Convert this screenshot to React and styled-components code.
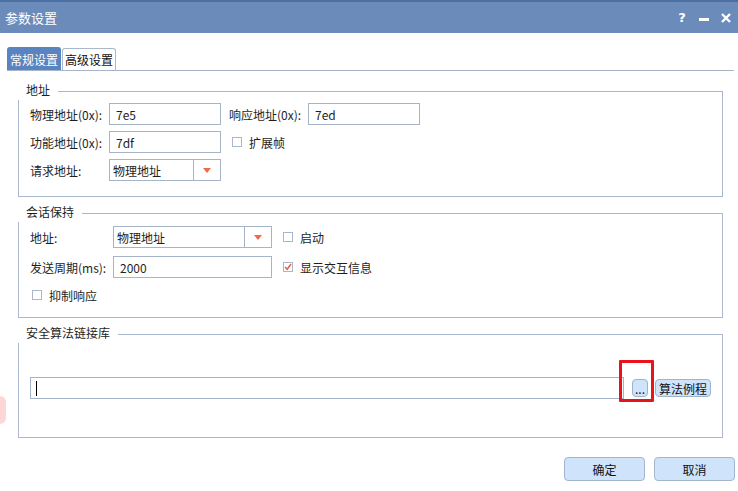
import React from "react";
import styled, { createGlobalStyle } from "styled-components";

const GlobalStyle = createGlobalStyle`
  html, body {
    margin: 0;
    padding: 0;
    background: #fff;
  }
  body {
    font-family: "Noto Sans CJK SC", "Noto Sans", sans-serif;
    font-size: 12px;
    color: #1e1e1e;
  }
`;

const Window = styled.div`
  position: relative;
  width: 738px;
  height: 491px;
  display: flex;
  flex-direction: column;
  background: #fff;
  overflow: hidden;
`;

const TitleBar = styled.div`
  height: 31px;
  border-top: 2px solid #4d70a2;
  background: #6b8cba;
  display: flex;
  align-items: center;
  padding: 0 7px 0 5px;
  color: #fff;
`;

const Title = styled.div`
  flex: 1;
  font-size: 13px;
  line-height: 1;
  margin-top: -1px;
`;

const TitleButtons = styled.div`
  display: flex;
  align-items: center;
  gap: 12px;
`;

const HelpGlyph = styled.span`
  font-family: "DejaVu Sans", sans-serif;
  font-weight: bold;
  font-size: 13px;
  width: 10px;
  text-align: center;
`;

const MinBar = styled.span`
  display: block;
  width: 10px;
  height: 3px;
  margin-top: 4px;
  background: #fff;
`;

const Body = styled.div`
  flex: 1;
  display: flex;
  flex-direction: column;
  padding: 14px 3px 0 7px;
`;

const TabStrip = styled.div`
  display: flex;
  align-items: flex-end;
  height: 23px;
  margin-right: 1px;
  border-bottom: 1px solid #a6b5c9;
`;

const Tab = styled.div`
  height: ${(p) => (p.$active ? "22px" : "21px")};
  padding: 0 2px;
  display: flex;
  align-items: center;
  font-size: 12px;
  border-radius: 3px 3px 0 0;
  border: 1px solid ${(p) => (p.$active ? "#5a84bf" : "#a9b8cc")};
  border-bottom: none;
  background: ${(p) => (p.$active ? "#5a84bf" : "#fff")};
  color: ${(p) => (p.$active ? "#fff" : "#111")};
  margin-right: 1px;
`;

const Groups = styled.div`
  display: flex;
  flex-direction: column;
  gap: 7px;
  padding: 11px 8px 0 11px;
`;

const Group = styled.div`
  width: 705px;
  position: relative;
`;

const GroupHeader = styled.div`
  display: flex;
  height: 18px;
`;

const GroupTitle = styled.div`
  padding: 0 8px;
  line-height: 16px;
  white-space: nowrap;
`;

const HeaderLine = styled.div`
  flex: 1;
  margin-top: 9px;
  border-top: 1px solid #a9b8cc;
  border-right: 1px solid #a9b8cc;
`;

const GroupBody = styled.div`
  border: 1px solid #a9b8cc;
  border-top: none;
  height: ${(p) => p.$h}px;
  box-sizing: border-box;
  padding: ${(p) => p.$pad};
  display: flex;
  flex-direction: column;
  gap: ${(p) => p.$gap || 6}px;
`;

const Row = styled.div`
  display: flex;
  align-items: center;
  height: ${(p) => p.$h || 22}px;
`;

const Label = styled.div`
  width: ${(p) => p.$w}px;
  white-space: nowrap;
`;

const TextBox = styled.div`
  width: ${(p) => p.$w}px;
  height: ${(p) => p.$h || 22}px;
  box-sizing: border-box;
  border: 1px solid #a6b4c8;
  padding-left: 6px;
  display: flex;
  align-items: center;
  margin-right: ${(p) => p.$mr || 0}px;
`;

const Caret = styled.span`
  display: block;
  width: 1px;
  height: 15px;
  margin-left: -1px;
  background: #000;
`;

const Select = styled.div`
  width: ${(p) => p.$w}px;
  height: 22px;
  box-sizing: border-box;
  border: 1px solid #a6b4c8;
  display: flex;
  margin-right: ${(p) => p.$mr || 0}px;
`;

const SelectValue = styled.div`
  flex: 1;
  display: flex;
  align-items: center;
  padding-left: 3px;
  border-right: 1px solid #a6b4c8;
`;

const SelectArrow = styled.div`
  width: 26px;
  display: flex;
  align-items: center;
  justify-content: center;
  &::after {
    content: "";
    border-left: 4px solid transparent;
    border-right: 4px solid transparent;
    border-top: 5px solid #f2674f;
  }
`;

const Check = styled.label`
  display: flex;
  align-items: center;
  gap: 7px;
  margin-left: ${(p) => p.$ml || 0}px;
  white-space: nowrap;
`;

const Box = styled.span`
  width: 10px;
  height: 10px;
  box-sizing: border-box;
  border: 1px solid #a9b8cc;
  display: flex;
  align-items: center;
  justify-content: center;
`;

const SmallButton = styled.div`
  height: 18px;
  box-sizing: border-box;
  padding: 0 ${(p) => p.$px}px;
  border: 1px solid #9fb3cc;
  border-radius: 4px;
  background: #cfe3fb;
  display: flex;
  align-items: center;
  font-size: 12px;
  color: #111;
  margin-left: ${(p) => p.$ml}px;
`;

const Highlight = styled.div`
  position: absolute;
  left: 601px;
  top: 35px;
  width: 35px;
  height: 42px;
  box-sizing: border-box;
  border: 3px solid #e8131c;
  border-radius: 1px;
`;

const Blob = styled.div`
  position: absolute;
  left: -6px;
  top: 396px;
  width: 12px;
  height: 28px;
  border-radius: 6px;
  background: #ffd6d6;
`;

const Footer = styled.div`
  display: flex;
  justify-content: flex-end;
  gap: 9px;
  padding: 19px 0 0 0;
`;

const DialogButton = styled.div`
  width: 81px;
  height: 24px;
  box-sizing: border-box;
  border: 1px solid #a3b6cd;
  border-radius: 4px;
  background: #cfe3fb;
  display: flex;
  align-items: center;
  justify-content: center;
  color: #111;
`;

const CheckBox = ({ checked, children, ml }) => (
  <Check $ml={ml}>
    <Box>
      {checked && (
        <svg width="8" height="8" viewBox="0 0 8 8">
          <path d="M1 4 L3.2 6.3 L7 1" fill="none" stroke="#ef5b4c" strokeWidth="1.5" />
        </svg>
      )}
    </Box>
    {children}
  </Check>
);

export default function App() {
  return (
    <Window>
      <GlobalStyle />
      <TitleBar>
        <Title>参数设置</Title>
        <TitleButtons>
          <HelpGlyph>?</HelpGlyph>
          <MinBar />
          <svg width="10" height="10" viewBox="0 0 10 10">
            <path d="M1 1 L9 9 M9 1 L1 9" stroke="#fff" strokeWidth="2.4" />
          </svg>
        </TitleButtons>
      </TitleBar>
      <Body>
        <TabStrip>
          <Tab $active>常规设置</Tab>
          <Tab>高级设置</Tab>
        </TabStrip>
        <Groups>
          <Group>
            <GroupHeader>
              <GroupTitle>地址</GroupTitle>
              <HeaderLine />
            </GroupHeader>
            <GroupBody $h={97} $pad="3px 0 0 11px">
              <Row>
                <Label $w={79}>物理地址(0x):</Label>
                <TextBox $w={112} $mr={8}>7e5</TextBox>
                <Label $w={79}>响应地址(0x):</Label>
                <TextBox $w={112}>7ed</TextBox>
              </Row>
              <Row>
                <Label $w={79}>功能地址(0x):</Label>
                <TextBox $w={112}>7df</TextBox>
                <CheckBox ml={11}>扩展帧</CheckBox>
              </Row>
              <Row>
                <Label $w={79}>请求地址:</Label>
                <Select $w={112}>
                  <SelectValue>物理地址</SelectValue>
                  <SelectArrow />
                </Select>
              </Row>
            </GroupBody>
          </Group>

          <Group>
            <GroupHeader>
              <GroupTitle>会话保持</GroupTitle>
              <HeaderLine />
            </GroupHeader>
            <GroupBody $h={96} $pad="4px 0 0 11px" $gap={8}>
              <Row>
                <Label $w={83}>地址:</Label>
                <Select $w={159}>
                  <SelectValue>物理地址</SelectValue>
                  <SelectArrow />
                </Select>
                <CheckBox ml={11}>启动</CheckBox>
              </Row>
              <Row>
                <Label $w={83}>发送周期(ms):</Label>
                <TextBox $w={159}>2000</TextBox>
                <CheckBox ml={11} checked>
                  显示交互信息
                </CheckBox>
              </Row>
              <Row $h={18}>
                <CheckBox ml={2}>抑制响应</CheckBox>
              </Row>
            </GroupBody>
          </Group>

          <Group>
            <GroupHeader>
              <GroupTitle>安全算法链接库</GroupTitle>
              <HeaderLine />
            </GroupHeader>
            <GroupBody $h={95} $pad="34px 0 0 11px">
              <Row>
                <TextBox $w={594}>
                  <Caret />
                </TextBox>
                <SmallButton $px={2} $ml={8}>
                  ...
                </SmallButton>
                <SmallButton $px={3} $ml={7}>
                  算法例程
                </SmallButton>
              </Row>
            </GroupBody>
            <Highlight />
          </Group>
        </Groups>
        <Footer>
          <DialogButton>确定</DialogButton>
          <DialogButton>取消</DialogButton>
        </Footer>
      </Body>
      <Blob />
    </Window>
  );
}
